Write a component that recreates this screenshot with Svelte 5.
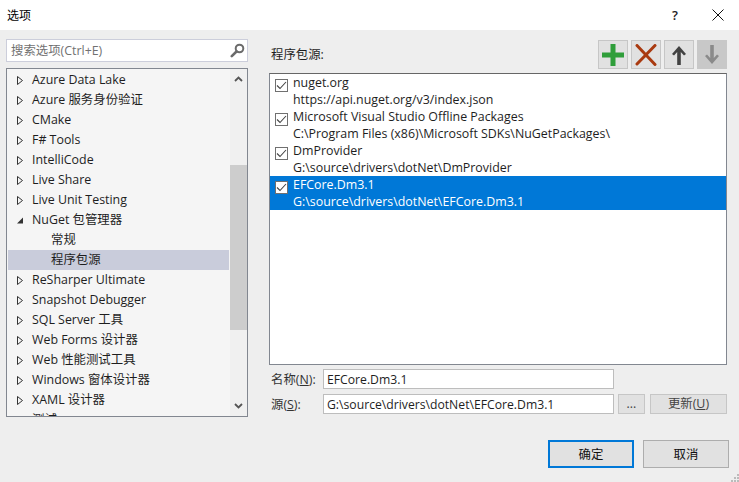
<script>
  const tree = [
    { t: 'Azure Data Lake', a: 'closed' },
    { t: 'Azure 服务身份验证', a: 'closed' },
    { t: 'CMake', a: 'closed' },
    { t: 'F# Tools', a: 'closed' },
    { t: 'IntelliCode', a: 'closed' },
    { t: 'Live Share', a: 'closed' },
    { t: 'Live Unit Testing', a: 'closed' },
    { t: 'NuGet 包管理器', a: 'open' },
    { t: '常规', a: 'child' },
    { t: '程序包源', a: 'child', sel: true },
    { t: 'ReSharper Ultimate', a: 'closed' },
    { t: 'Snapshot Debugger', a: 'closed' },
    { t: 'SQL Server 工具', a: 'closed' },
    { t: 'Web Forms 设计器', a: 'closed' },
    { t: 'Web 性能测试工具', a: 'closed' },
    { t: 'Windows 窗体设计器', a: 'closed' },
    { t: 'XAML 设计器', a: 'closed' },
    { t: '测试', a: 'closed' }
  ];
  const sources = [
    { n: 'nuget.org', p: 'https://api.nuget.org/v3/index.json' },
    { n: 'Microsoft Visual Studio Offline Packages', p: 'C:\\Program Files (x86)\\Microsoft SDKs\\NuGetPackages\\' },
    { n: 'DmProvider', p: 'G:\\source\\drivers\\dotNet\\DmProvider' },
    { n: 'EFCore.Dm3.1', p: 'G:\\source\\drivers\\dotNet\\EFCore.Dm3.1', sel: true }
  ];
</script>

<div class="dialog">
  <header class="titlebar">
    <span class="title">选项</span>
    <span class="help">?</span>
    <svg class="close" width="12" height="12" viewBox="0 0 12 12"><path d="M.5.5l11 11M11.5.5l-11 11" stroke="#111" fill="none"/></svg>
  </header>

  <div class="body">
    <aside class="left">
      <div class="search">
        <span class="placeholder">搜索选项(Ctrl+E)</span>
        <svg width="15" height="15" viewBox="0 0 15 15"><circle cx="9.500" cy="5.500" r="3.800" fill="none" stroke="#6b6b6b" stroke-width="2"/><path d="M6.500 8.500L1.800 13.200" stroke="#6b6b6b" stroke-width="2.600" stroke-linecap="round"/></svg>
      </div>
      <div class="tree">
        <div class="rows">
          {#each tree as r}
            <div class="row" class:sel={r.sel} class:child={r.a === 'child'}>
              {#if r.a === 'closed'}
                <svg class="arrow" width="6" height="9" viewBox="0 0 6 9"><path d="M.5.5L5.500 4.500.5 8.500z" fill="#f5f5f5" stroke="#333"/></svg>
              {:else if r.a === 'open'}
                <svg class="arrow" width="6" height="9" viewBox="0 0 6 9"><path d="M0 7.500L6 1.500V7.500z" fill="#333"/></svg>
              {/if}
              <span>{r.t}</span>
            </div>
          {/each}
        </div>
        <div class="scroll">
          <svg class="chev" width="9" height="6" viewBox="0 0 9 6"><path d="M1 5l3.500-3.500L8 5" fill="none" stroke="#555" stroke-width="1.800"/></svg>
          <div class="track"><div class="thumb"></div></div>
          <svg class="chev" width="9" height="6" viewBox="0 0 9 6"><path d="M1 1l3.500 3.500L8 1" fill="none" stroke="#555" stroke-width="1.800"/></svg>
        </div>
      </div>
    </aside>

    <main class="right">
      <div class="head">
        <span class="heading">程序包源:</span>
        <div class="tools">
          <button class="tool" aria-label="添加"><svg width="22" height="22" viewBox="0 0 22 22"><path d="M8.500 0h5v8.500h8.500v5h-8.500v8.500h-5v-8.500h-8.500v-5h8.500z" fill="#2f9e3a"/></svg></button>
          <button class="tool" aria-label="删除"><svg width="22" height="22" viewBox="0 0 22 22"><path d="M2 1.500L20 20.500M20 1.500L2 20" stroke="#a93a10" stroke-width="3" stroke-linecap="round" fill="none"/></svg></button>
          <button class="tool" aria-label="上移"><svg width="16" height="20" viewBox="0 0 16 20"><path d="M8 1L15 9l-2 1.500-3.200-3.500V20H6.200V7L3 10.500 1 9z" fill="#424242"/></svg></button>
          <button class="tool off" aria-label="下移"><svg width="16" height="20" viewBox="0 0 16 20"><path d="M8 19L15 11l-2-1.500-3.200 3.500V0H6.200v13L3 9.500 1 11z" fill="#8a8a8a"/></svg></button>
        </div>
      </div>

      <div class="list">
        {#each sources as s}
          <div class="src" class:sel={s.sel}>
            <span class="check"><svg width="11" height="9" viewBox="0 0 11 9"><path d="M1 4.500L4 7.500 10 1" fill="none" stroke="#444" stroke-width="1.100"/></svg></span>
            <div class="src-text">
              <div>{s.n}</div>
              <div>{s.p}</div>
            </div>
          </div>
        {/each}
      </div>

      <div class="form">
        <div class="frow">
          <span class="lab">名称(<u>N</u>):</span>
          <div class="input name">EFCore.Dm3.1</div>
        </div>
        <div class="frow">
          <span class="lab">源(<u>S</u>):</span>
          <div class="input path">G:\source\drivers\dotNet\EFCore.Dm3.1</div>
          <button class="small dots">...</button>
          <button class="small update">更新(<u>U</u>)</button>
        </div>
      </div>
    </main>
  </div>

  <footer class="foot">
    <button class="btn primary">确定</button>
    <button class="btn">取消</button>
    <svg class="grip" width="8" height="8" viewBox="0 0 8 8"><path d="M6 0h2v2H6zM3 3h2v2H3zM6 3h2v2H6zM0 6h2v2H0zM3 6h2v2H3zM6 6h2v2H6z" fill="#bbb"/></svg>
  </footer>
</div>

<style>
  :global(body) { margin: 0; background: #eeeeee; }
  .dialog {
    width: 739px; height: 482px; display: flex; flex-direction: column; overflow: hidden;
    background: #eeeeee; color: #1e1e1e;
    font: 12.4px/17px "Open Sans", "Noto Sans CJK SC", sans-serif;
  }
  .titlebar {
    height: 30px; background: #fff; flex: none; display: flex; align-items: center;
    padding: 0 15px 0 7px; box-sizing: border-box;
  }
  .title { font-size: 12px; color: #000; flex: 1; }
  .help { margin-right: 34px; font-size: 13px; font-weight: 600; color: #222; }
  .body { display: flex; flex: none; height: 387px; padding: 9px 0 0 6px; box-sizing: border-box; }
  .left { width: 242px; flex: none; display: flex; flex-direction: column; gap: 6px; }
  .search {
    height: 23px; box-sizing: border-box; border: 1px solid #cccedb; background: #fff;
    display: flex; align-items: center; justify-content: space-between; padding: 0 2px 0 4px;
  }
  .placeholder { color: #717171; }
  .tree {
    height: 349px; box-sizing: border-box; border: 1px solid #828790; background: #f5f5f5;
    display: flex; overflow: hidden;
  }
  .rows { flex: 1; padding: 1px 1px 0 1px; overflow: hidden; }
  .row { height: 20px; box-sizing: border-box; padding: 0 0 2px 9px; display: flex; align-items: center; white-space: nowrap; }
  .row.child { padding-left: 43px; }
  .row.sel { background: #c9ccdb; }
  .arrow { margin: 2px 9px 0 0; flex: none; }
  .scroll { width: 17px; flex: none; background: #f0f0f0; display: flex; flex-direction: column; align-items: center; }
  .chev { flex: none; margin: 7px 0; }
  .track { flex: 1; width: 100%; }
  .thumb { width: 100%; height: 165px; margin-top: 76px; background: #cdcdcd; }
  .right { width: 458px; margin-left: 21px; flex: none; display: flex; flex-direction: column; }
  .head { height: 34px; display: flex; justify-content: space-between; align-items: flex-start; flex: none; }
  .heading { margin: 7px 0 0 2px; }
  .tools { display: flex; gap: 3px; margin-top: 1px; }
  .tool {
    width: 30px; height: 29px; padding: 0; box-sizing: border-box; border: 1px solid #c6c6c6; background: #e1e1e1;
    display: flex; align-items: center; justify-content: center;
  }
  .tool.off { background: #c8c8c8; border-color: #c8c8c8; }
  .list {
    height: 292px; box-sizing: border-box; background: #fff; border: 1px solid #828790; border-top-color: #666;
    padding-top: 1px; flex: none;
  }
  .src { height: 34px; display: flex; align-items: flex-start; padding-left: 5px; box-sizing: border-box; }
  .src:first-child { margin-top: 0; }
  .src.sel { background: #0078d7; color: #fff; margin-top: -1px; }
  .src-text { margin: -1px 0 0 5px; line-height: 17px; white-space: nowrap; }
  .src.sel .src-text { margin-top: 0; }
  .check {
    width: 13px; height: 13px; margin-top: 4px; box-sizing: border-box; border: 1px solid #707070; background: #fff;
    display: flex; align-items: center; justify-content: center; flex: none;
  }
  .src.sel .check { margin-top: 5px; }
  .form { display: flex; flex-direction: column; gap: 5px; margin-top: 4px; }
  .frow { display: flex; align-items: center; height: 20px; position: relative; }
  .lab { width: 54px; padding-left: 2px; box-sizing: border-box; flex: none; color: #333; }
  .input {
    width: 291px; height: 20px; box-sizing: border-box; border: 1px solid #bdbdbd; background: #fff;
    padding: 0 3px; line-height: 19px; font-size: 12.2px; white-space: nowrap; overflow: hidden;
  }
  .small {
    height: 20px; padding: 0; border: 1px solid #c6c6c6; background: #e1e1e1; color: #444;
    font: inherit; line-height: 16px; box-sizing: border-box;
  }
  .dots { width: 27px; margin-left: 4px; }
  .update { width: 77px; margin-left: 5px; }
  .foot { flex: 1; position: relative; display: flex; justify-content: flex-end; align-items: flex-start; gap: 9px; padding: 23px 10px 0 0; box-sizing: border-box; }
  .btn {
    width: 86px; height: 28px; padding: 0; box-sizing: border-box; border: 1px solid #adadad; background: #e1e1e1;
    font: inherit; color: #111;
  }
  .btn.primary { border: 2px solid #0078d7; }
  .grip { position: absolute; right: 0; bottom: 0; }
</style>
